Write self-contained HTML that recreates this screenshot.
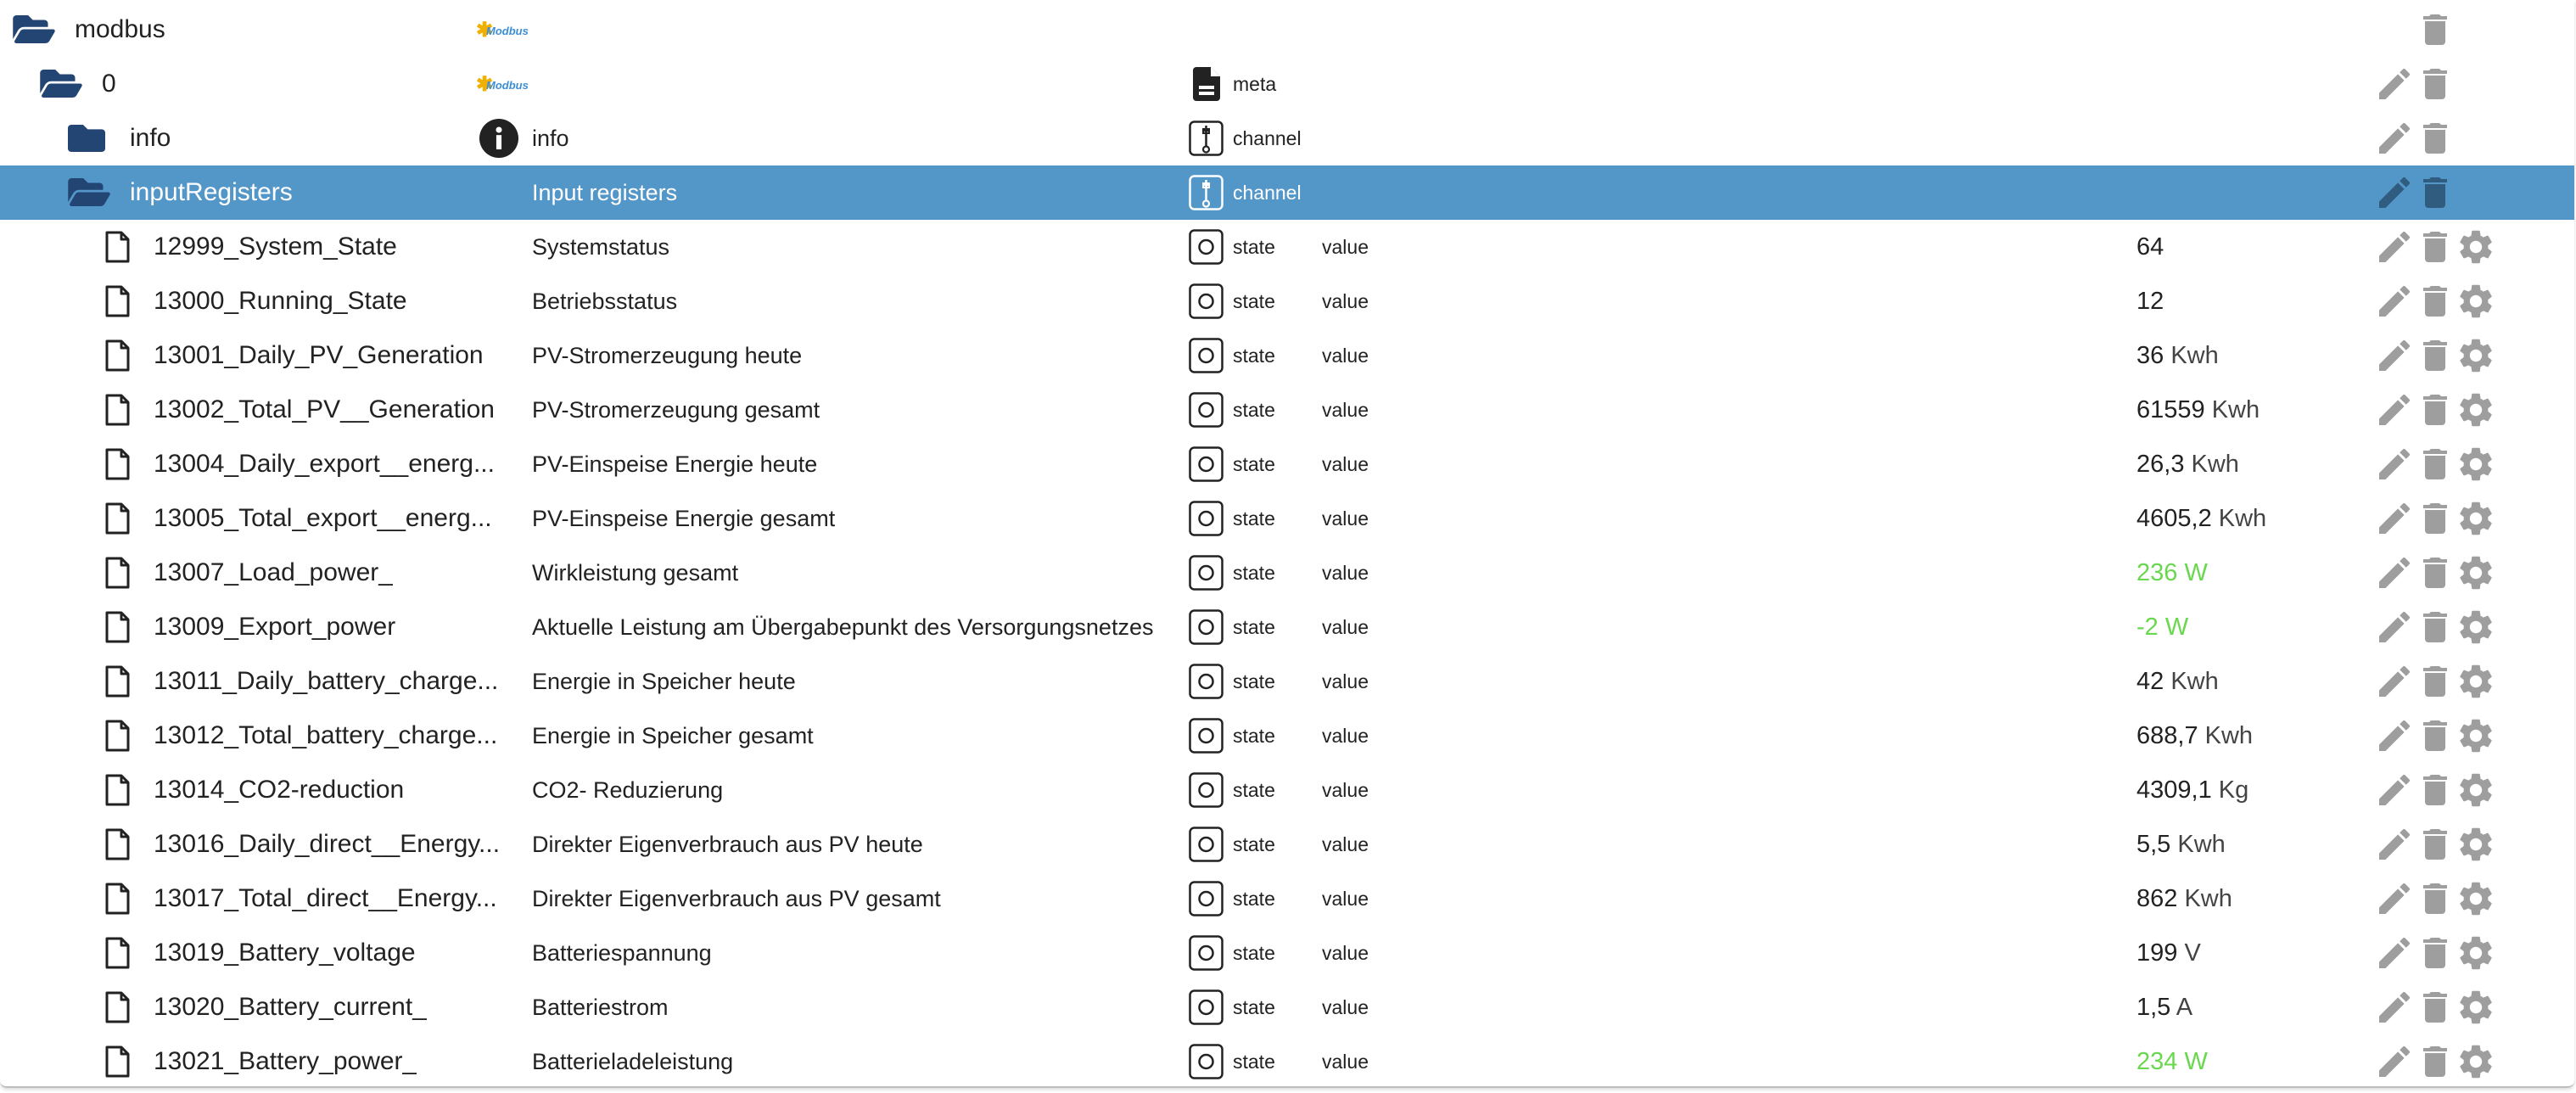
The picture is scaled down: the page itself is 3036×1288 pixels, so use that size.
<!DOCTYPE html>
<html><head><meta charset="utf-8">
<style>
html,body{margin:0;padding:0;background:#fff;width:3036px;height:1288px;overflow:hidden;font-family:"Liberation Sans",sans-serif;color:#222}
#c{position:absolute;left:0;top:0;width:3034px;height:1280px;border-bottom:2px solid #bdbdbd;border-radius:0 0 8px 8px;box-shadow:0 2px 4px rgba(0,0,0,.15)}
.r{position:absolute;left:0;width:3034px;height:64px}
.sel{background:#5396c8;color:#fff}
.t{position:absolute;top:0;line-height:64px;white-space:nowrap}
.n{font-size:30px;max-width:442px;overflow:hidden}
.d{font-size:27px;left:627px}
.ty{font-size:23px;left:1453px}
.v{font-size:23px;left:1558px}
.val{font-size:29px;left:2518px}
.u{color:#444}
.g{color:#6ad84e}
.g .u{color:#6ad84e}
svg{position:absolute;overflow:visible}
.pe{left:2798px;top:8px;width:48px;height:48px}
.tr{left:2846px;top:8px;width:48px;height:48px}
.ge{left:2894px;top:8px;width:48px;height:48px}
.ti{left:1401px;top:11px;width:41px;height:42px}
.fi{left:124px;top:13px;width:29px;height:38px}
.logo{position:absolute;left:561px;top:22px;width:56px;height:22px}
.logo b{position:absolute;left:0;top:-4px;color:#f0b000;font-size:24px}
.logo i{position:absolute;left:12px;top:4px;color:#3b8ed6;font-size:13px;font-weight:bold}
</style></head><body>
<svg width="0" height="0" style="position:absolute">
<defs>
<path id="pen" d="M3 17.25V21h3.75L17.81 9.94l-3.75-3.75L3 17.25zM20.71 7.04a1 1 0 000-1.41l-2.34-2.34a1 1 0 00-1.41 0l-1.83 1.83 3.75 3.75 1.83-1.83z"/>
<path id="trash" d="M6 19c0 1.1.9 2 2 2h8c1.1 0 2-.9 2-2V7H6v12zM19 4h-3.5l-1-1h-5l-1 1H5v2h14V4z"/>
<path id="gear" d="M19.14 12.94c.04-.3.06-.61.06-.94 0-.32-.02-.64-.07-.94l2.03-1.58a.49.49 0 00.12-.61l-1.92-3.32a.488.488 0 00-.59-.22l-2.39.96c-.5-.38-1.03-.7-1.62-.94l-.36-2.54a.484.484 0 00-.48-.41h-3.84c-.24 0-.43.17-.47.41l-.36 2.54c-.59.24-1.13.57-1.62.94l-2.39-.96c-.22-.08-.47 0-.59.22L2.74 8.87c-.12.21-.08.47.12.61l2.03 1.58c-.05.3-.09.63-.09.94s.02.64.07.94l-2.03 1.58a.49.49 0 00-.12.61l1.920 3.32c.12.22.37.29.59.22l2.39-.96c.5.38 1.03.7 1.62.94l.36 2.54c.05.24.24.41.48.41h3.84c.24 0 .44-.17.47-.41l.36-2.54c.59-.24 1.13-.56 1.62-.94l2.39.96c.22.08.47 0 .59-.22l1.92-3.32c.12-.22.07-.47-.12-.61l-2.01-1.58zM12 15.6c-1.98 0-3.6-1.62-3.6-3.6s1.62-3.6 3.6-3.6 3.6 1.62 3.6 3.6-1.62 3.6-3.6 3.6z"/>
<path id="fopen" d="M572.694 292.093L500.27 416.248A63.997 63.997 0 0 1 444.989 448H45.025c-18.523 0-30.064-20.093-20.731-36.093l72.424-124.155A64 64 0 0 1 152 256h399.964c18.523 0 30.064 20.093 20.73 36.093zM152 224h328v-48c0-26.51-21.49-48-48-48H272l-64-64H48C21.49 64 0 85.49 0 112v278.046l69.077-118.418C86.214 242.25 117.989 224 152 224z"/>
<g id="file"><path d="M2 2H19L27 10V36H2Z" fill="none" stroke="#222" stroke-width="3" stroke-linejoin="round"/><path d="M19 2V10H27" fill="none" stroke="#222" stroke-width="3" stroke-linejoin="round"/></g>
<g id="state"><rect x="1.5" y="1.5" width="38" height="39" rx="5" fill="none" stroke="#222" stroke-width="2.5"/><circle cx="20.5" cy="21" r="8" fill="none" stroke="#222" stroke-width="2.5"/></g>
</defs></svg>
<div id="c">

<div class="r" style="top:3px">
<svg style="left:15px;top:15px;width:50px;height:33px" viewBox="0 64 576 384"><use href="#fopen" fill="#234573"/></svg>
<div class="t n" style="left:88px">modbus</div>
<div class="logo"><b>✱</b><i>Modbus</i></div>
<svg class="tr" viewBox="0 0 24 24"><use href="#trash" fill="#9e9e9e"/></svg>
</div>

<div class="r" style="top:67px">
<svg style="left:47px;top:15px;width:50px;height:33px" viewBox="0 64 576 384"><use href="#fopen" fill="#234573"/></svg>
<div class="t n" style="left:120px">0</div>
<div class="logo"><b>✱</b><i>Modbus</i></div>
<svg style="left:1406px;top:12px;width:32px;height:40px" viewBox="0 0 32 40"><path d="M4 0H21L32 11V36A4 4 0 0 1 28 40H4A4 4 0 0 1 0 36V4A4 4 0 0 1 4 0Z" fill="#222"/><path d="M21 0L32 11H21Z" fill="#fff"/><rect x="7" y="22" width="18" height="4" fill="#fff"/><rect x="7" y="29" width="18" height="4" fill="#fff"/></svg>
<div class="t ty">meta</div>
<svg class="pe" viewBox="0 0 24 24"><use href="#pen" fill="#9e9e9e"/></svg>
<svg class="tr" viewBox="0 0 24 24"><use href="#trash" fill="#9e9e9e"/></svg>
</div>

<div class="r" style="top:131px">
<svg style="left:80px;top:16px;width:44px;height:32px" viewBox="0 64 512 384" preserveAspectRatio="none"><path d="M464 128H272l-64-64H48C21.49 64 0 85.49 0 112v288c0 26.51 21.49 48 48 48h416c26.51 0 48-21.49 48-48V176c0-26.51-21.49-48-48-48z" fill="#234573"/></svg>
<div class="t n" style="left:153px">info</div>
<svg style="left:565px;top:9px;width:46px;height:46px" viewBox="0 0 30 30"><circle cx="15" cy="15" r="15" fill="#222"/><circle cx="15" cy="8.5" r="2.3" fill="#fff"/><rect x="13" y="12.5" width="4" height="11" fill="#fff"/></svg>
<div class="t d">info</div>
<svg class="ti" viewBox="0 0 41 42"><rect x="1.5" y="1.5" width="38" height="39" rx="5" fill="none" stroke="#222" stroke-width="2.5"/><path d="M20.5 6V30M16 12H25" stroke="#222" stroke-width="2.5" fill="none"/><rect x="17" y="10" width="7" height="5" fill="none" stroke="#222" stroke-width="2"/><circle cx="20.5" cy="34" r="3.5" fill="none" stroke="#222" stroke-width="2.2"/></svg>
<div class="t ty">channel</div>
<svg class="pe" viewBox="0 0 24 24"><use href="#pen" fill="#9e9e9e"/></svg>
<svg class="tr" viewBox="0 0 24 24"><use href="#trash" fill="#9e9e9e"/></svg>
</div>

<div class="r sel" style="top:195px">
<svg style="left:80px;top:15px;width:50px;height:33px" viewBox="0 64 576 384"><use href="#fopen" fill="#234573"/></svg>
<div class="t n" style="left:153px">inputRegisters</div>
<div class="t d">Input registers</div>
<svg class="ti" viewBox="0 0 41 42"><rect x="1.5" y="1.5" width="38" height="39" rx="5" fill="none" stroke="#fff" stroke-width="2.5"/><path d="M20.5 6V30M16 12H25" stroke="#fff" stroke-width="2.5" fill="none"/><rect x="17" y="10" width="7" height="5" fill="none" stroke="#fff" stroke-width="2"/><circle cx="20.5" cy="34" r="3.5" fill="none" stroke="#fff" stroke-width="2.2"/></svg>
<div class="t ty">channel</div>
<svg class="pe" viewBox="0 0 24 24"><use href="#pen" fill="#305c80"/></svg>
<svg class="tr" viewBox="0 0 24 24"><use href="#trash" fill="#305c80"/></svg>
</div>

<div class="r" style="top:259px"><svg class="fi" viewBox="0 0 29 38"><use href="#file"/></svg><div class="t n" style="left:181px">12999_System_State</div><div class="t d">Systemstatus</div><svg class="ti" viewBox="0 0 41 42"><use href="#state"/></svg><div class="t ty">state</div><div class="t v">value</div><div class="t val">64</div><svg class="pe" viewBox="0 0 24 24"><use href="#pen" fill="#9e9e9e"/></svg><svg class="tr" viewBox="0 0 24 24"><use href="#trash" fill="#9e9e9e"/></svg><svg class="ge" viewBox="0 0 24 24"><use href="#gear" fill="#9e9e9e"/></svg></div>

<div class="r" style="top:323px"><svg class="fi" viewBox="0 0 29 38"><use href="#file"/></svg><div class="t n" style="left:181px">13000_Running_State</div><div class="t d">Betriebsstatus</div><svg class="ti" viewBox="0 0 41 42"><use href="#state"/></svg><div class="t ty">state</div><div class="t v">value</div><div class="t val">12</div><svg class="pe" viewBox="0 0 24 24"><use href="#pen" fill="#9e9e9e"/></svg><svg class="tr" viewBox="0 0 24 24"><use href="#trash" fill="#9e9e9e"/></svg><svg class="ge" viewBox="0 0 24 24"><use href="#gear" fill="#9e9e9e"/></svg></div>

<div class="r" style="top:387px"><svg class="fi" viewBox="0 0 29 38"><use href="#file"/></svg><div class="t n" style="left:181px">13001_Daily_PV_Generation</div><div class="t d">PV-Stromerzeugung heute</div><svg class="ti" viewBox="0 0 41 42"><use href="#state"/></svg><div class="t ty">state</div><div class="t v">value</div><div class="t val">36 <span class="u">Kwh</span></div><svg class="pe" viewBox="0 0 24 24"><use href="#pen" fill="#9e9e9e"/></svg><svg class="tr" viewBox="0 0 24 24"><use href="#trash" fill="#9e9e9e"/></svg><svg class="ge" viewBox="0 0 24 24"><use href="#gear" fill="#9e9e9e"/></svg></div>

<div class="r" style="top:451px"><svg class="fi" viewBox="0 0 29 38"><use href="#file"/></svg><div class="t n" style="left:181px">13002_Total_PV__Generation</div><div class="t d">PV-Stromerzeugung gesamt</div><svg class="ti" viewBox="0 0 41 42"><use href="#state"/></svg><div class="t ty">state</div><div class="t v">value</div><div class="t val">61559 <span class="u">Kwh</span></div><svg class="pe" viewBox="0 0 24 24"><use href="#pen" fill="#9e9e9e"/></svg><svg class="tr" viewBox="0 0 24 24"><use href="#trash" fill="#9e9e9e"/></svg><svg class="ge" viewBox="0 0 24 24"><use href="#gear" fill="#9e9e9e"/></svg></div>

<div class="r" style="top:515px"><svg class="fi" viewBox="0 0 29 38"><use href="#file"/></svg><div class="t n" style="left:181px">13004_Daily_export__energ...</div><div class="t d">PV-Einspeise Energie heute</div><svg class="ti" viewBox="0 0 41 42"><use href="#state"/></svg><div class="t ty">state</div><div class="t v">value</div><div class="t val">26,3 <span class="u">Kwh</span></div><svg class="pe" viewBox="0 0 24 24"><use href="#pen" fill="#9e9e9e"/></svg><svg class="tr" viewBox="0 0 24 24"><use href="#trash" fill="#9e9e9e"/></svg><svg class="ge" viewBox="0 0 24 24"><use href="#gear" fill="#9e9e9e"/></svg></div>

<div class="r" style="top:579px"><svg class="fi" viewBox="0 0 29 38"><use href="#file"/></svg><div class="t n" style="left:181px">13005_Total_export__energ...</div><div class="t d">PV-Einspeise Energie gesamt</div><svg class="ti" viewBox="0 0 41 42"><use href="#state"/></svg><div class="t ty">state</div><div class="t v">value</div><div class="t val">4605,2 <span class="u">Kwh</span></div><svg class="pe" viewBox="0 0 24 24"><use href="#pen" fill="#9e9e9e"/></svg><svg class="tr" viewBox="0 0 24 24"><use href="#trash" fill="#9e9e9e"/></svg><svg class="ge" viewBox="0 0 24 24"><use href="#gear" fill="#9e9e9e"/></svg></div>

<div class="r" style="top:643px"><svg class="fi" viewBox="0 0 29 38"><use href="#file"/></svg><div class="t n" style="left:181px">13007_Load_power_</div><div class="t d">Wirkleistung gesamt</div><svg class="ti" viewBox="0 0 41 42"><use href="#state"/></svg><div class="t ty">state</div><div class="t v">value</div><div class="t val g">236 <span class="u">W</span></div><svg class="pe" viewBox="0 0 24 24"><use href="#pen" fill="#9e9e9e"/></svg><svg class="tr" viewBox="0 0 24 24"><use href="#trash" fill="#9e9e9e"/></svg><svg class="ge" viewBox="0 0 24 24"><use href="#gear" fill="#9e9e9e"/></svg></div>

<div class="r" style="top:707px"><svg class="fi" viewBox="0 0 29 38"><use href="#file"/></svg><div class="t n" style="left:181px">13009_Export_power</div><div class="t d">Aktuelle Leistung am Übergabepunkt des Versorgungsnetzes</div><svg class="ti" viewBox="0 0 41 42"><use href="#state"/></svg><div class="t ty">state</div><div class="t v">value</div><div class="t val g">-2 <span class="u">W</span></div><svg class="pe" viewBox="0 0 24 24"><use href="#pen" fill="#9e9e9e"/></svg><svg class="tr" viewBox="0 0 24 24"><use href="#trash" fill="#9e9e9e"/></svg><svg class="ge" viewBox="0 0 24 24"><use href="#gear" fill="#9e9e9e"/></svg></div>

<div class="r" style="top:771px"><svg class="fi" viewBox="0 0 29 38"><use href="#file"/></svg><div class="t n" style="left:181px">13011_Daily_battery_charge...</div><div class="t d">Energie in Speicher heute</div><svg class="ti" viewBox="0 0 41 42"><use href="#state"/></svg><div class="t ty">state</div><div class="t v">value</div><div class="t val">42 <span class="u">Kwh</span></div><svg class="pe" viewBox="0 0 24 24"><use href="#pen" fill="#9e9e9e"/></svg><svg class="tr" viewBox="0 0 24 24"><use href="#trash" fill="#9e9e9e"/></svg><svg class="ge" viewBox="0 0 24 24"><use href="#gear" fill="#9e9e9e"/></svg></div>

<div class="r" style="top:835px"><svg class="fi" viewBox="0 0 29 38"><use href="#file"/></svg><div class="t n" style="left:181px">13012_Total_battery_charge...</div><div class="t d">Energie in Speicher gesamt</div><svg class="ti" viewBox="0 0 41 42"><use href="#state"/></svg><div class="t ty">state</div><div class="t v">value</div><div class="t val">688,7 <span class="u">Kwh</span></div><svg class="pe" viewBox="0 0 24 24"><use href="#pen" fill="#9e9e9e"/></svg><svg class="tr" viewBox="0 0 24 24"><use href="#trash" fill="#9e9e9e"/></svg><svg class="ge" viewBox="0 0 24 24"><use href="#gear" fill="#9e9e9e"/></svg></div>

<div class="r" style="top:899px"><svg class="fi" viewBox="0 0 29 38"><use href="#file"/></svg><div class="t n" style="left:181px">13014_CO2-reduction</div><div class="t d">CO2- Reduzierung</div><svg class="ti" viewBox="0 0 41 42"><use href="#state"/></svg><div class="t ty">state</div><div class="t v">value</div><div class="t val">4309,1 <span class="u">Kg</span></div><svg class="pe" viewBox="0 0 24 24"><use href="#pen" fill="#9e9e9e"/></svg><svg class="tr" viewBox="0 0 24 24"><use href="#trash" fill="#9e9e9e"/></svg><svg class="ge" viewBox="0 0 24 24"><use href="#gear" fill="#9e9e9e"/></svg></div>

<div class="r" style="top:963px"><svg class="fi" viewBox="0 0 29 38"><use href="#file"/></svg><div class="t n" style="left:181px">13016_Daily_direct__Energy...</div><div class="t d">Direkter Eigenverbrauch aus PV heute</div><svg class="ti" viewBox="0 0 41 42"><use href="#state"/></svg><div class="t ty">state</div><div class="t v">value</div><div class="t val">5,5 <span class="u">Kwh</span></div><svg class="pe" viewBox="0 0 24 24"><use href="#pen" fill="#9e9e9e"/></svg><svg class="tr" viewBox="0 0 24 24"><use href="#trash" fill="#9e9e9e"/></svg><svg class="ge" viewBox="0 0 24 24"><use href="#gear" fill="#9e9e9e"/></svg></div>

<div class="r" style="top:1027px"><svg class="fi" viewBox="0 0 29 38"><use href="#file"/></svg><div class="t n" style="left:181px">13017_Total_direct__Energy...</div><div class="t d">Direkter Eigenverbrauch aus PV gesamt</div><svg class="ti" viewBox="0 0 41 42"><use href="#state"/></svg><div class="t ty">state</div><div class="t v">value</div><div class="t val">862 <span class="u">Kwh</span></div><svg class="pe" viewBox="0 0 24 24"><use href="#pen" fill="#9e9e9e"/></svg><svg class="tr" viewBox="0 0 24 24"><use href="#trash" fill="#9e9e9e"/></svg><svg class="ge" viewBox="0 0 24 24"><use href="#gear" fill="#9e9e9e"/></svg></div>

<div class="r" style="top:1091px"><svg class="fi" viewBox="0 0 29 38"><use href="#file"/></svg><div class="t n" style="left:181px">13019_Battery_voltage</div><div class="t d">Batteriespannung</div><svg class="ti" viewBox="0 0 41 42"><use href="#state"/></svg><div class="t ty">state</div><div class="t v">value</div><div class="t val">199 <span class="u">V</span></div><svg class="pe" viewBox="0 0 24 24"><use href="#pen" fill="#9e9e9e"/></svg><svg class="tr" viewBox="0 0 24 24"><use href="#trash" fill="#9e9e9e"/></svg><svg class="ge" viewBox="0 0 24 24"><use href="#gear" fill="#9e9e9e"/></svg></div>

<div class="r" style="top:1155px"><svg class="fi" viewBox="0 0 29 38"><use href="#file"/></svg><div class="t n" style="left:181px">13020_Battery_current_</div><div class="t d">Batteriestrom</div><svg class="ti" viewBox="0 0 41 42"><use href="#state"/></svg><div class="t ty">state</div><div class="t v">value</div><div class="t val">1,5 <span class="u">A</span></div><svg class="pe" viewBox="0 0 24 24"><use href="#pen" fill="#9e9e9e"/></svg><svg class="tr" viewBox="0 0 24 24"><use href="#trash" fill="#9e9e9e"/></svg><svg class="ge" viewBox="0 0 24 24"><use href="#gear" fill="#9e9e9e"/></svg></div>

<div class="r" style="top:1219px"><svg class="fi" viewBox="0 0 29 38"><use href="#file"/></svg><div class="t n" style="left:181px">13021_Battery_power_</div><div class="t d">Batterieladeleistung</div><svg class="ti" viewBox="0 0 41 42"><use href="#state"/></svg><div class="t ty">state</div><div class="t v">value</div><div class="t val g">234 <span class="u">W</span></div><svg class="pe" viewBox="0 0 24 24"><use href="#pen" fill="#9e9e9e"/></svg><svg class="tr" viewBox="0 0 24 24"><use href="#trash" fill="#9e9e9e"/></svg><svg class="ge" viewBox="0 0 24 24"><use href="#gear" fill="#9e9e9e"/></svg></div>

</div>
</body></html>
